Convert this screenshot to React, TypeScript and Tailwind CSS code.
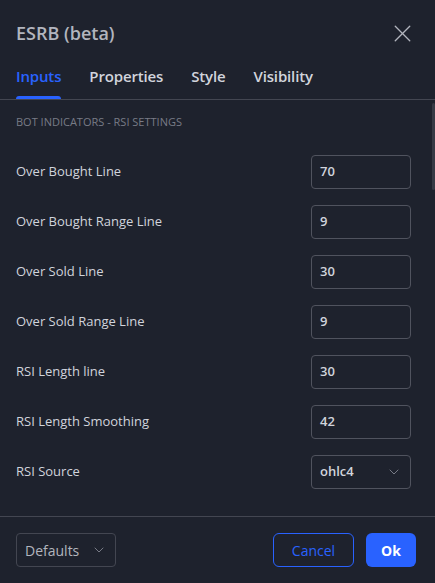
import { X, ChevronDown } from 'lucide-react';

const rows = [
  { label: 'Over Bought Line', value: '70' },
  { label: 'Over Bought Range Line', value: '9' },
  { label: 'Over Sold Line', value: '30' },
  { label: 'Over Sold Range Line', value: '9' },
  { label: 'RSI Length line', value: '30' },
  { label: 'RSI Length Smoothing', value: '42' },
];

export default function App() {
  return (
    <div
      className="w-[435px] h-[583px] bg-[#1e222d] text-[#d1d4dc] flex flex-col overflow-hidden"
      style={{ fontFamily: '"Open Sans", sans-serif' }}
    >
      <div className="flex items-center justify-between h-[66px] pl-4 pr-[16px] pt-0">
        <h2 className="text-[18px] font-semibold text-[#b2b5be]">ESRB (beta)</h2>
        <button className="text-[#b2b5be] mr-[2px]">
          <X className="w-[29px] h-[29px]" strokeWidth={1.1} />
        </button>
      </div>

      <div className="flex gap-[28px] px-4 border-b border-[#434651] h-[34px] items-start tracking-[-0.15px]">
        <div className="relative text-[15px] font-semibold text-[#2962ff] leading-[20px] pt-0">
          Inputs
          <span className="absolute left-0 right-0 top-[30px] h-[3px] bg-[#2962ff] rounded-t-sm" />
        </div>
        <div className="text-[15px] font-semibold leading-[20px] text-[#d1d4dc]">Properties</div>
        <div className="text-[15px] font-semibold leading-[20px] text-[#d1d4dc]">Style</div>
        <div className="text-[15px] font-semibold leading-[20px] text-[#d1d4dc]">Visibility</div>
      </div>

      <div className="relative flex-1 overflow-hidden">
        <div className="absolute right-0 top-[3px] w-[3px] h-[87px] bg-[#363a45] rounded-full" />
        <div className="pl-4 pr-[8px] pt-[14px]">
          <div className="text-[11px] uppercase text-[#787b86]">Bot Indicators - RSI Settings</div>
          <div className="flex flex-col mt-[24px] gap-4">
            {rows.map((r) => (
              <div key={r.label} className="flex items-center justify-between h-[34px] pr-[16px]">
                <span className="text-[13px]">{r.label}</span>
                <div className="w-[100px] h-[34px] border border-[#50535e] rounded-[4px] flex items-center px-[8px] text-[13px] font-semibold">
                  {r.value}
                </div>
              </div>
            ))}
            <div className="flex items-center justify-between h-[34px] pr-[16px]">
              <span className="text-[13px]">RSI Source</span>
              <div className="w-[100px] h-[34px] border border-[#50535e] rounded-[4px] flex items-center justify-between pl-[8px] pr-[8px] text-[13px] font-semibold">
                ohlc4
                <ChevronDown className="w-4 h-4 text-[#787b86]" strokeWidth={1.5} />
              </div>
            </div>
          </div>
        </div>
      </div>

      <div className="h-[67px] border-t border-[#434651] flex items-center justify-between px-4 shrink-0">
        <div className="w-[100px] h-[34px] border border-[#434651] rounded-[4px] flex items-center justify-between pl-[8px] pr-[8px] text-[14px] text-[#b2b5be]">
          Defaults
          <ChevronDown className="w-4 h-4 text-[#787b86]" strokeWidth={1.5} />
        </div>
        <div className="flex gap-[12px] mr-[3px]">
          <button className="w-[81px] h-[34px] border border-[#2962ff] rounded-[6px] text-[14px] text-[#2962ff]">Cancel</button>
          <button className="w-[50px] h-[34px] bg-[#2962ff] rounded-[6px] text-[14px] font-bold text-white">Ok</button>
        </div>
      </div>
    </div>
  );
}
